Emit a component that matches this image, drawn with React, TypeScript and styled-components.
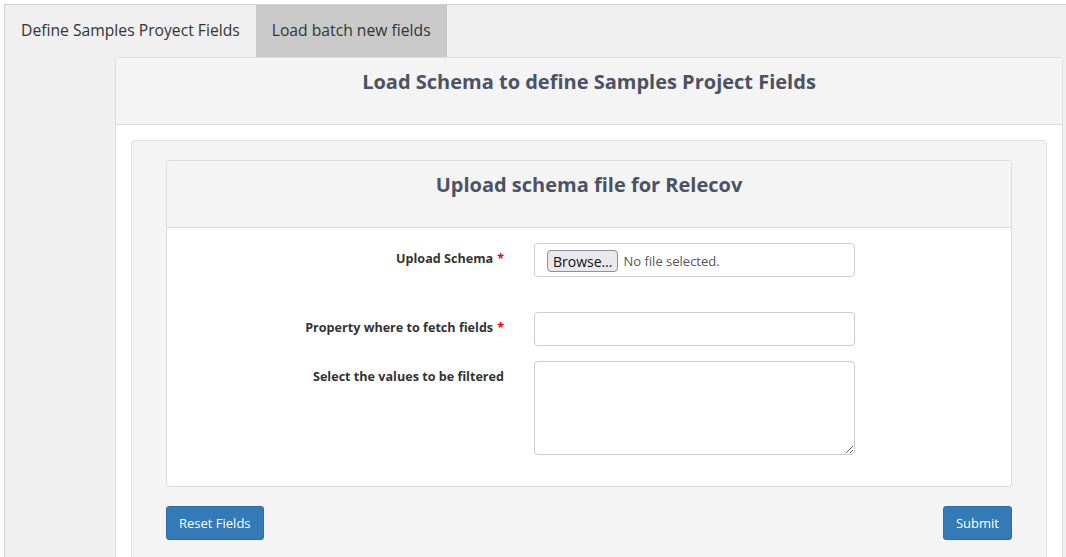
import styled, { createGlobalStyle } from "styled-components";

const GlobalStyle = createGlobalStyle`
  html, body {
    margin: 0;
    padding: 0;
    background: #ffffff;
    font-family: "Open Sans", "Liberation Sans", sans-serif;
    color: #333;
  }
`;

const Page = styled.div`
  margin: 4px 0 0 4px;
  border-top: 1px solid #d0d0d0;
  border-left: 1px solid #d0d0d0;
  background: #f0f0f0;
  min-height: 560px;
`;

const TabBar = styled.div`
  display: flex;
  height: 52px;
`;

const Tab = styled.div<{ active?: boolean }>`
  display: flex;
  align-items: center;
  padding: 0 16px 2px 16px;
  font-size: 15.7px;
  color: #333;
  background: ${(p) => (p.active ? "#c9c9c9" : "transparent")};
`;

const TabContent = styled.div`
  padding: 0 3px 0 110px;
`;

const Panel = styled.div`
  border: 1px solid #dcdcdc;
  border-radius: 3px;
  background: #fff;
`;

const PanelHeader = styled.div`
  background: #f4f4f4;
  border-bottom: 1px solid #dcdcdc;
  border-radius: 3px 3px 0 0;
  height: 67px;
  box-sizing: border-box;
  padding-top: 11px;
  text-align: center;
`;

const Title = styled.h3`
  margin: 0;
  font-size: 20px;
  line-height: 26px;
  font-weight: 700;
  color: #4b5263;
`;

const PanelBody = styled.div`
  padding: 15px 15px 0 15px;
`;

const Well = styled.div`
  background: #f4f4f4;
  border: 1px solid #e0e0e0;
  border-radius: 4px;
  padding: 19px 34px 40px 34px;
`;

const FormBody = styled.div`
  padding: 15px 0 31px 0;
`;

const FormRow = styled.div<{ gap: number }>`
  display: grid;
  grid-template-columns: 352px 351px;
  margin-bottom: ${(p) => p.gap}px;
`;

const Label = styled.label<{ top?: number }>`
  padding: 0 15px 0 0;
  margin-top: ${(p) => p.top ?? 7}px;
  text-align: right;
  font-size: 12.6px;
  line-height: 18px;
  font-weight: 700;
  color: #333;
`;

const Required = styled.span`
  color: #e00;
  margin-left: 4px;
`;

const Field = styled.div`
  padding-left: 15px;
`;

const FileBox = styled.div`
  box-sizing: border-box;
  width: 321px;
  height: 34px;
  border: 1px solid #ccc;
  border-radius: 4px;
  background: #fff;
  display: flex;
  align-items: center;
  padding: 2px 12px 0 12px;
  font-size: 13px;
  color: #555;
`;

const BrowseButton = styled.span`
  display: inline-flex;
  align-items: center;
  height: 22px;
  box-sizing: border-box;
  padding: 0 5px;
  margin-right: 5px;
  border: 1px solid #8f8f9d;
  border-radius: 4px;
  background: #e9e9ed;
  color: #111;
  font-size: 14px;
`;

const TextInput = styled.input`
  box-sizing: border-box;
  width: 321px;
  height: 34px;
  border: 1px solid #ccc;
  border-radius: 4px;
  padding: 6px 12px;
  font: inherit;
  display: block;
`;

const TextArea = styled.textarea`
  box-sizing: border-box;
  width: 321px;
  height: 94px;
  border: 1px solid #ccc;
  border-radius: 4px;
  padding: 6px 12px;
  font: inherit;
  display: block;
`;

const Actions = styled.div`
  display: flex;
  justify-content: space-between;
  margin-top: 19px;
`;

const Button = styled.button`
  height: 34px;
  padding: 0 12px;
  border: 1px solid #2e6da4;
  border-radius: 3px;
  background: #337ab7;
  color: #fff;
  font-family: "Open Sans", "Liberation Sans", sans-serif;
  font-size: 13px;
`;

export default function App() {
  return (
    <>
      <GlobalStyle />
      <Page>
        <TabBar>
          <Tab>Define Samples Proyect Fields</Tab>
          <Tab active>Load batch new fields</Tab>
        </TabBar>
        <TabContent>
          <Panel>
            <PanelHeader>
              <Title>Load Schema to define Samples Project Fields</Title>
            </PanelHeader>
            <PanelBody>
              <Well>
                <Panel>
                  <PanelHeader>
                    <Title>Upload schema file for Relecov</Title>
                  </PanelHeader>
                  <FormBody>
                    <FormRow gap={35}>
                      <Label>
                        Upload Schema<Required>*</Required>
                      </Label>
                      <Field>
                        <FileBox>
                          <BrowseButton>Browse…</BrowseButton>
                          No file selected.
                        </FileBox>
                      </Field>
                    </FormRow>
                    <FormRow gap={15}>
                      <Label>
                        Property where to fetch fields<Required>*</Required>
                      </Label>
                      <Field>
                        <TextInput />
                      </Field>
                    </FormRow>
                    <FormRow gap={0}>
                      <Label top={7}>Select the values to be filtered</Label>
                      <Field>
                        <TextArea />
                      </Field>
                    </FormRow>
                  </FormBody>
                </Panel>
                <Actions>
                  <Button>Reset Fields</Button>
                  <Button>Submit</Button>
                </Actions>
              </Well>
            </PanelBody>
          </Panel>
        </TabContent>
      </Page>
    </>
  );
}
